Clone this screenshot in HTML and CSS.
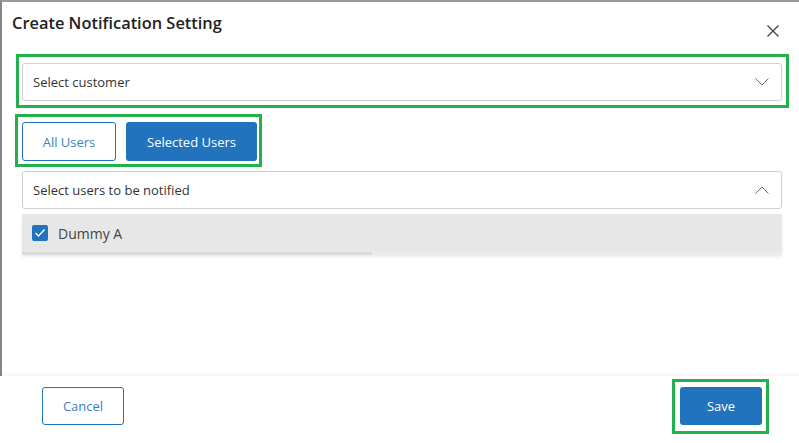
FILE: index.html
```html
<!DOCTYPE html>
<html lang="en">
<head>
  <meta charset="UTF-8" />
  <title>Create Notification Setting</title>
  <link rel="stylesheet" href="styles.css">
</head>
<body>
  <div class="modal">
    <!-- =========  BODY  ========= -->
    <div class="modal-body">
      <header class="modal-header">
        <h1>Create Notification Setting</h1>
        <button class="close" aria-label="Close">
          <svg width="12" height="12" viewBox="0 0 12 12">
            <path d="M0.5 0.5 L11.5 11.5 M11.5 0.5 L0.5 11.5" stroke="#444" stroke-width="1.3" fill="none"/>
          </svg>
        </button>
      </header>

      <!-- customer picker -->
      <div class="hl hl-customer">
        <div class="select">
          <span>Select customer</span>
          <svg class="chev" width="14" height="8" viewBox="0 0 14 8">
            <path d="M0.5 0.5 L7 7 L13.5 0.5" stroke="#666" stroke-width="1" fill="none"/>
          </svg>
        </div>
      </div>

      <!-- user scope toggle -->
      <div class="hl hl-scope">
        <button class="btn btn-outline">All Users</button>
        <button class="btn btn-primary">Selected Users</button>
      </div>

      <!-- users multi-select -->
      <div class="users">
        <div class="select">
          <span>Select users to be notified</span>
          <svg class="chev" width="14" height="8" viewBox="0 0 14 8">
            <path d="M0.5 7.5 L7 1 L13.5 7.5" stroke="#666" stroke-width="1" fill="none"/>
          </svg>
        </div>
        <div class="options">
          <label class="option">
            <span class="check">
              <svg width="12" height="10" viewBox="0 0 12 10">
                <path d="M1.5 5 L4.5 8 L10.5 1.5" stroke="#fff" stroke-width="1.4" fill="none"/>
              </svg>
            </span>
            Dummy A
          </label>
          <div class="scroll"><div class="thumb"></div></div>
        </div>
      </div>
    </div>

    <!-- =========  FOOTER  ========= -->
    <footer class="modal-footer">
      <button class="btn btn-outline btn-cancel">Cancel</button>
      <div class="hl hl-save">
        <button class="btn btn-primary btn-save">Save</button>
      </div>
    </footer>
  </div>
</body>
</html>
```

FILE: styles.css
```css
/* --- design tokens --- */
:root {
  --blue:   #2273bd;
  --green:  #22b14c;
  --line:   #cfcfcf;
  --text:   #333;
}

* { box-sizing: border-box; margin:0; padding:0; }

body {
  font-family: "Open Sans", sans-serif;
  color: var(--text);
  background:#fff;
  width:799px;
  height:443px;
  overflow:hidden;
}

.modal {
  display:flex;
  flex-direction:column;
  height:443px;
}

.modal-body {
  flex:1;
  border-top:2px solid #9a9a9a;
  border-left:2px solid #858585;
}

.modal-header {
  display:flex;
  justify-content:space-between;
  align-items:flex-start;
  padding:9px 20px 0 10px;
  height:52px;
}
.modal-header h1 {
  font-size:16.4px;
  font-weight:600;
  line-height:24px;
  color:#222;
}
.close {
  background:none; border:none;
  margin-top:14px;
  width:12px; height:12px;
  display:flex;
}

/* green highlight frames */
.hl { border:3px solid var(--green); }

.hl-customer {
  margin:0 10px 0 14px;
  padding:6px 4px 4px 3px;
}

.select {
  height:38px;
  border:1px solid var(--line);
  border-radius:3px;
  display:flex;
  align-items:center;
  justify-content:space-between;
  padding:0 12px 0 10px;
  font-size:13px;
  background:#fff;
}
.chev { display:block; }

.hl-scope {
  display:inline-flex;
  gap:10px;
  margin:6px 0 0 13px;
  padding:5px 2px 3px 4px;
}

.btn {
  font-family:inherit;
  font-size:13px;
  height:39px;
  border-radius:3px;
  cursor:pointer;
}
.btn-outline {
  background:#fff;
  color:#3a7fc4;
  border:1px solid var(--blue);
  width:94px;
}
.btn-primary {
  background:var(--blue);
  color:#fff;
  border:none;
  width:131px;
}

.users {
  margin:4px 17px 0 20px;
}
.options {
  margin-top:5px;
  background:#e6e7e6;
  box-shadow:0 2px 3px rgba(0,0,0,.08);
}
.option {
  height:38px;
  display:flex;
  align-items:center;
  gap:10px;
  padding-left:10px;
  font-size:14px;
  color:#444;
}
.check {
  width:16px; height:16px;
  background:var(--blue);
  border-radius:2px;
  display:flex;
  align-items:center;
  justify-content:center;
}
.scroll {
  height:3px;
  background:#ebebeb;
}
.thumb {
  width:350px;
  height:3px;
  background:#dadada;
}

/* --- footer --- */
.modal-footer {
  height:67px;
  flex:none;
  display:flex;
  justify-content:space-between;
  align-items:flex-start;
  padding:0 30px 0 42px;
  box-shadow:0 -2px 4px rgba(0,0,0,.05);
}
.btn-cancel {
  width:82px;
  height:38px;
  margin-top:11px;
}
.hl-save {
  margin-top:3px;
  padding:5px 4px 6px 5px;
}
.btn-save {
  width:82px;
  height:38px;
}
```
